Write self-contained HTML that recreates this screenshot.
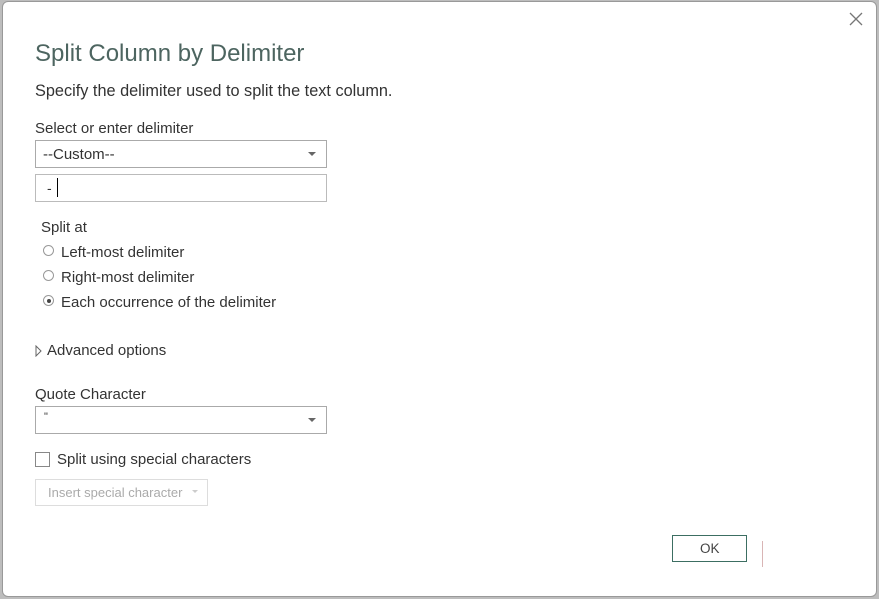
<!DOCTYPE html>
<html><head><style>
body{margin:0;width:879px;height:599px;background:#bdbdbd;position:relative;overflow:hidden;font-family:"Liberation Sans",sans-serif;color:#333}
.d{position:absolute;left:2px;top:1px;width:873px;height:594px;background:#fff;border:1px solid #999;border-radius:6px}
.t{position:absolute;white-space:nowrap}
.box{position:absolute;border:1px solid #aaa;background:#fff;box-sizing:border-box}
.arr{position:absolute;width:0;height:0;border-left:4px solid transparent;border-right:4px solid transparent;border-top:4px solid #666}
.rad{position:absolute;width:11px;height:11px;border:1px solid #999;border-radius:50%;box-sizing:border-box}
</style></head><body>
<div class="d"></div>
<svg style="position:absolute;left:849px;top:12px" width="14" height="14"><path d="M1 1L13 13M13 1L1 13" stroke="#777" stroke-width="1.3"/></svg>
<div class="t" style="left:35px;top:40px;font-size:24px;color:#4d6560">Split Column by Delimiter</div>
<div class="t" style="left:35px;top:82px;font-size:16.3px">Specify the delimiter used to split the text column.</div>
<div class="t" style="left:35px;top:120px;font-size:15px">Select or enter delimiter</div>
<div class="box" style="left:35px;top:140px;width:292px;height:28px"></div>
<div class="t" style="left:43px;top:146px;font-size:15px">--Custom--</div>
<div class="arr" style="left:308px;top:152px"></div>
<div class="box" style="left:35px;top:174px;width:292px;height:28px;border-color:#bbb"></div>
<div class="t" style="left:47px;top:180px;font-size:14px">-</div>
<div style="position:absolute;left:57px;top:178px;width:1px;height:19px;background:#000"></div>
<div class="t" style="left:41px;top:219px;font-size:15px">Split at</div>
<div class="rad" style="left:43px;top:245px"></div>
<div class="t" style="left:61px;top:244px;font-size:15px">Left-most delimiter</div>
<div class="rad" style="left:43px;top:270px"></div>
<div class="t" style="left:61px;top:269px;font-size:15px">Right-most delimiter</div>
<div class="rad" style="left:43px;top:295px"></div>
<div style="position:absolute;left:46.5px;top:298.5px;width:4px;height:4px;border-radius:50%;background:#444"></div>
<div class="t" style="left:61px;top:294px;font-size:15px">Each occurrence of the delimiter</div>
<svg style="position:absolute;left:35px;top:345px" width="8" height="12"><path d="M1 1L6 6L1 11Z" fill="none" stroke="#666"/></svg>
<div class="t" style="left:47px;top:342px;font-size:15px">Advanced options</div>
<div class="t" style="left:35px;top:386px;font-size:15px">Quote Character</div>
<div class="box" style="left:35px;top:406px;width:292px;height:28px"></div>
<div class="t" style="left:44px;top:411px;font-size:11px">"</div>
<div class="arr" style="left:308px;top:418px"></div>
<div class="box" style="left:35px;top:452px;width:15px;height:15px;border-color:#888"></div>
<div class="t" style="left:57px;top:451px;font-size:15px">Split using special characters</div>
<div class="box" style="left:35px;top:479px;width:173px;height:27px;border-color:#ddd"></div>
<div class="t" style="left:48px;top:485px;font-size:13px;color:#aaa">Insert special character</div>
<div class="arr" style="left:192px;top:490px;border-top-color:#ccc;border-width:3px 3px 0"></div>
<div class="box" style="left:672px;top:535px;width:75px;height:27px;border:1px solid #3c6e62"></div>
<div class="t" style="left:700px;top:541px;font-size:13.5px;color:#444">OK</div>
<div style="position:absolute;left:762px;top:541px;width:1px;height:26px;background:#d9b5b5"></div>
</body></html>
